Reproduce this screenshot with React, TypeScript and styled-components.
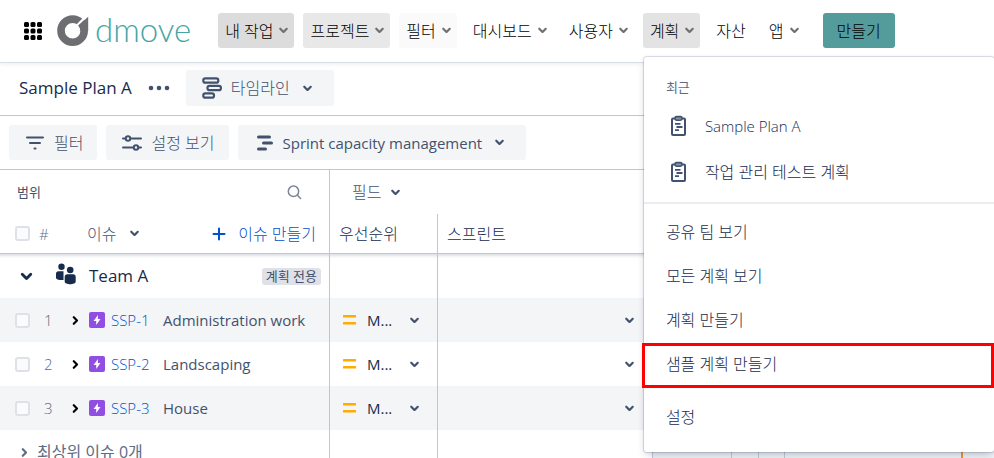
import React from "react";
import styled, { createGlobalStyle } from "styled-components";

const color = {
  ink: "#172b4d",
  text: "#42526e",
  subtle: "#5e6c84",
  line: "#c1c7d0",
  fill: "#f4f5f7",
  link: "#0052cc",
};

const Global = createGlobalStyle`
  *, *::before, *::after { box-sizing: border-box; }
  body {
    margin: 0;
    background: #fff;
    color: ${color.ink};
    font-family: "Open Sans", "Noto Sans CJK KR", sans-serif;
    font-size: 16px;
    font-weight: 300;
    line-height: 20px;
  }
  button { font: inherit; color: inherit; border: 0; background: none; padding: 0; cursor: pointer; white-space: nowrap; }
  a { color: inherit; text-decoration: none; }
  svg { display: block; flex: none; }
  ul { list-style: none; margin: 0; padding: 0; }
`;

const Page = styled.div`
  height: 100vh;
  overflow: hidden;
`;

/* ---------- top navigation ---------- */

const TopBar = styled.header`
  position: relative;
  z-index: 2;
  display: flex;
  align-items: center;
  padding: 13px 0 14px 24px;
  border-bottom: 1px solid #d9dfe8;
  box-shadow: 0 2px 3px rgba(9, 30, 66, 0.06);
`;

const Brand = styled.a`
  display: flex;
  align-items: center;
  gap: 5px;
  height: 35px;
  margin-left: 15px;
  margin-right: 27px;
`;

const Wordmark = styled.span`
  font-family: Lato, sans-serif;
  font-weight: 300;
  font-size: 33px;
  line-height: 32px;
  padding-bottom: 3px;
  color: #45a5a6;
`;

const Nav = styled.nav`
  display: flex;
  gap: 9px;
`;

const NavItem = styled.div`
  position: relative;
`;

const NavButton = styled.button<{ $bg?: string }>`
  display: flex;
  align-items: center;
  gap: 4px;
  height: 35px;
  padding: 0 4px 0 7px;
  border-radius: 3px;
  color: #000;
  background: ${(p) => p.$bg ?? "transparent"};
`;

const NavLink = styled.a`
  display: flex;
  align-items: center;
  height: 35px;
  padding: 0 7px;
  color: #000;
`;

const CreateButton = styled.button`
  height: 35px;
  margin-left: 9px;
  padding: 0 14px;
  border-radius: 3px;
  color: #000;
  background: #549b9c;
`;

/* ---------- plan menu ---------- */

const Menu = styled.div`
  position: absolute;
  top: 44px;
  left: 1px;
  width: 350px;
  padding: 20px 0 13px;
  border-radius: 3px;
  background: #fff;
  box-shadow: 0 4px 8px -2px rgba(9, 30, 66, 0.25), 0 0 1px 1px rgba(9, 30, 66, 0.16);
`;

const MenuTitle = styled.h2`
  margin: 0 0 6px;
  padding: 0 22px;
  font-size: 13px;
  line-height: 20px;
  font-weight: 400;
  color: ${color.subtle};
`;

const MenuGroup = styled.ul<{ $ruled?: boolean; $spaced?: boolean }>`
  ${(p) => p.$ruled && "margin-top: 7px; padding-top: 6px; border-top: 2px solid #ebecf0;"}
  ${(p) => p.$spaced && "margin-top: 9px;"}
`;

const MenuEntry = styled.li<{ $marked?: boolean }>`
  position: relative;
  ${(p) =>
    p.$marked &&
    `&::after {
      content: "";
      position: absolute;
      inset: 1px 0 -2px -2px;
      border: 3px solid #ff0000;
      pointer-events: none;
    }`}
`;

const MenuLink = styled.a<{ $recent?: boolean }>`
  display: flex;
  align-items: center;
  gap: 14px;
  height: ${(p) => (p.$recent ? 46 : 44)}px;
  padding: 0 22px;
`;

const Latin = styled.span`
  font-size: 15px;
`;

/* ---------- plan header and toolbar ---------- */

const PlanBar = styled.div`
  display: flex;
  align-items: center;
  padding: 7px 0 9px 19px;
  border-bottom: 1px solid ${color.line};
`;

const PlanTitle = styled.h1`
  margin: 0;
  font-size: 17px;
  font-weight: 400;
`;

const MoreButton = styled.button`
  margin: 0 16px;
`;

const Toolbar = styled.div`
  display: flex;
  gap: 9px;
  padding: 9px;
  border-bottom: 1px solid ${color.line};
`;

const ToolButton = styled.button<{ $tall?: boolean; $strong?: boolean; $drop?: boolean }>`
  display: flex;
  align-items: center;
  gap: 9px;
  height: ${(p) => (p.$tall ? 36 : 35)}px;
  padding: 0 ${(p) => (p.$drop ? 20 : 14)}px 0 16px;
  border-radius: 3px;
  color: ${color.text};
  background: ${color.fill};
  font-size: ${(p) => (p.$strong ? 15 : 16)}px;
  font-weight: ${(p) => (p.$strong ? 500 : 300)};
  svg + svg { margin-left: 2px; }
`;

/* ---------- issue table ---------- */

const Grid = styled.table`
  width: 100%;
  table-layout: fixed;
  border-collapse: separate;
  border-spacing: 0;
  th, td { padding: 0; font-weight: inherit; text-align: left; }
`;

const ScopeCol = styled.col`width: 330px;`;
const PriorityCol = styled.col`width: 108px;`;
const SprintCol = styled.col`width: 214px;`;

const HeadCell = styled.th<{ $ruled?: boolean; $last?: boolean }>`
  height: ${(p) => (p.$last ? 40 : 44)}px;
  border-right: ${(p) => (p.$ruled ? `1px solid ${color.line}` : "0")};
  border-bottom: ${(p) => (p.$last ? `1px solid ${color.line}` : "0")};
`;

const Row = styled.tr<{ $shaded?: boolean; $first?: boolean }>`
  background: ${(p) => (p.$shaded ? color.fill : "#fff")};
  td { ${(p) => p.$first && "box-shadow: inset 0 4px 3px -2px rgba(9, 30, 66, 0.14);"} }
`;

const Cell = styled.td<{ $ruled?: boolean }>`
  height: 44px;
  border-right: ${(p) => (p.$ruled ? `1px solid ${color.line}` : "0")};
`;

const Line = styled.div<{ $start: number; $end?: number }>`
  display: flex;
  align-items: center;
  padding: 0 ${(p) => p.$end ?? 0}px 0 ${(p) => p.$start}px;
`;

const Push = styled.span`
  margin-left: auto;
  display: flex;
`;

const SectionLabel = styled.span`
  font-size: 13px;
  font-weight: 400;
  color: ${color.text};
`;

const Check = styled.input`
  appearance: none;
  flex: none;
  width: 15px;
  height: 15px;
  margin: 0;
  border: 2px solid #dfe1e6;
  border-radius: 3px;
  background: #fafbfc;
`;

const Num = styled.span<{ $wide?: boolean }>`
  flex: none;
  width: ${(p) => (p.$wide ? 48 : 25)}px;
  margin-left: ${(p) => (p.$wide ? 9 : 14)}px;
  font-size: 15px;
  color: ${color.subtle};
`;

const TextButton = styled.button<{ $link?: boolean; $gap?: number }>`
  display: flex;
  align-items: center;
  gap: ${(p) => p.$gap ?? 12}px;
  color: ${(p) => (p.$link ? color.link : color.text)};
`;

const ColumnName = styled.span`
  font-size: 16px;
`;

const IssueKey = styled.a`
  margin-left: 6px;
  width: 52px;
  font-size: 15px;
  color: ${color.link};
`;

const Summary = styled.span`
  font-size: 15px;
  font-weight: 500;
  color: ${color.text};
  white-space: nowrap;
`;

const Toggle = styled.button`
  margin-right: 7px;
  color: #000;
`;

const TeamToggle = styled.button`
  margin-right: 20px;
  color: ${color.ink};
`;

const TeamName = styled.span`
  margin-left: 12px;
  font-size: 17px;
  font-weight: 500;
`;

const Badge = styled.span`
  padding: 0 4px;
  border-radius: 3px;
  background: #dfe1e6;
  color: ${color.text};
  font-size: 13px;
  line-height: 17px;
  font-weight: 400;
`;

const PickButton = styled.button`
  display: flex;
  align-items: center;
  width: 100%;
  color: ${color.text};
`;

const PickValue = styled.span`
  margin-left: 10px;
  font-size: 15px;
  font-weight: 400;
  color: ${color.ink};
`;

const RestButton = styled.button`
  display: flex;
  align-items: center;
  gap: 6px;
  font-weight: 400;
  color: ${color.subtle};
`;

const Timeline = styled.div`
  position: relative;
  display: flex;
  height: 44px;
  background: #f0f1f4;
`;

const Slot = styled.span<{ $w?: number }>`
  flex: ${(p) => (p.$w ? `0 0 ${p.$w}px` : "1")};
  border-left: 1px solid ${color.line};
`;

const TodayLine = styled.span`
  position: absolute;
  top: 0;
  bottom: 0;
  right: 31px;
  width: 2px;
  background: #f79232;
`;

/* ---------- icons ---------- */

const CHEVRON =
  "M8.292 10.293a1.009 1.009 0 0 0 0 1.419l2.939 2.965c.218.215.5.322.779.322s.556-.107.769-.322l2.93-2.955a1.01 1.01 0 0 0 0-1.419.987.987 0 0 0-1.406 0l-2.298 2.317-2.307-2.327a.99.99 0 0 0-1.406 0z";

const Chevron = ({ size = 13, right = false, fill = "currentColor" }) => (
  <svg width={size} height={size} viewBox="6 6.6 12 12" aria-hidden="true">
    <path d={CHEVRON} fill={fill} transform={right ? "rotate(-90 12 12.6)" : undefined} />
  </svg>
);

const AppsIcon = () => (
  <svg width="18" height="18" viewBox="0 0 18 18" aria-hidden="true">
    {[0, 6.5, 13].map((y) => [0, 6.5, 13].map((x) => <rect key={`${x}-${y}`} x={x} y={y} width="5" height="5" rx="1.5" />))}
  </svg>
);

const LogoMark = () => (
  <svg width="33" height="33" viewBox="0 0 33 33" aria-hidden="true">
    <circle cx="15.6" cy="16.7" r="11.6" fill="none" stroke="#6d6e71" strokeWidth="7.6" />
    <path d="M31 0.5 20 11.5" stroke="#fff" strokeWidth="2.4" />
    <path d="M31.2 2.8V17H23.4A8 8 0 0 0 21.2 11.4Z" fill="#6d6e71" />
  </svg>
);

const DotsIcon = () => (
  <svg width="22" height="6" viewBox="0 0 22 6" fill={color.text} aria-hidden="true">
    <circle cx="3" cy="3" r="2.3" />
    <circle cx="11" cy="3" r="2.3" />
    <circle cx="19" cy="3" r="2.3" />
  </svg>
);

const TimelineIcon = () => (
  <svg width="20" height="22" viewBox="0 0 20 22" fill="none" stroke={color.text} strokeWidth="2.2" aria-hidden="true">
    <rect x="1.3" y="1.3" width="15" height="4.4" rx="2" />
    <rect x="5.5" y="8.8" width="13.4" height="4.4" rx="2" />
    <rect x="1.3" y="16.3" width="10.7" height="4.4" rx="2" />
  </svg>
);

const FilterIcon = () => (
  <svg width="20" height="16" viewBox="0 0 20 16" stroke={color.text} strokeWidth="2" strokeLinecap="round" aria-hidden="true">
    <path d="M2 2.5h16M5 8h10M9.5 13.5h1" />
  </svg>
);

const SettingsIcon = () => (
  <svg width="20" height="18" viewBox="1 0 20 18" fill="none" stroke={color.text} strokeWidth="2" strokeLinecap="round" aria-hidden="true">
    <path d="M2 4.5h2M10 4.5h10M2 13.5h10M18 13.5h2" />
    <circle cx="7" cy="4.5" r="2.2" />
    <circle cx="15" cy="13.5" r="2.2" />
  </svg>
);

const BarsIcon = () => (
  <svg width="20" height="18" viewBox="-2 0 20 18" stroke={color.text} strokeWidth="3" strokeLinecap="round" aria-hidden="true">
    <path d="M2.5 3h11M7.5 9h8M2.5 15h7" />
  </svg>
);

const SearchIcon = () => (
  <svg width="15" height="15" viewBox="0 0 15 15" fill="none" stroke="#7a869a" strokeWidth="1.5" strokeLinecap="round" aria-hidden="true">
    <circle cx="6.5" cy="6.3" r="5.2" />
    <path d="m10.4 10.3 3.2 3.2" />
  </svg>
);

const PlusIcon = () => (
  <svg width="14" height="14" viewBox="0 0 14 14" stroke={color.link} strokeWidth="2" strokeLinecap="round" aria-hidden="true">
    <path d="M7 1.5v11M1.5 7h11" />
  </svg>
);

const PlanIcon = () => (
  <svg width="25" height="22" viewBox="0 0 25 22" fill="none" stroke={color.text} strokeWidth="2" aria-hidden="true">
    <rect x="6" y="3.6" width="13" height="16.5" rx="1" />
    <rect x="9" y="1.6" width="7" height="3.6" rx="1.6" fill="#8993a4" strokeWidth="1.6" />
    <path d="M9 8.8h5.5M10.5 12h6M9 15.2h4" strokeWidth="1.8" />
  </svg>
);

const EpicIcon = () => (
  <svg width="16" height="16" viewBox="0 0 16 16" aria-hidden="true">
    <rect width="16" height="16" rx="2" fill="#904ee2" />
    <path d="M8.9 3v4h2.6L7.2 13V9H4.6Z" fill="#fff" />
  </svg>
);

const TeamIcon = () => (
  <svg width="22" height="26" viewBox="0 0 22 26" fill={color.ink} aria-hidden="true">
    <circle cx="6.5" cy="3.7" r="3.2" />
    <path d="M1 10.8a2.6 2.6 0 0 1 2.6-2.6H8.5V17C4 17.3 1 16.2 1 15Z" />
    <circle cx="15.2" cy="7" r="3.3" />
    <path d="M9.7 14a2.7 2.7 0 0 1 2.7-2.7h5.6A2.7 2.7 0 0 1 20.7 14v4.5c0 3.6-11 3.6-11 0Z" />
  </svg>
);

const MediumIcon = () => (
  <svg width="15" height="12" viewBox="0 0 15 12" fill="#ffab00" aria-hidden="true">
    <rect x="1" y="1" width="13" height="2.5" rx="0.5" />
    <rect x="1" y="8" width="13" height="2.5" rx="0.5" />
  </svg>
);

/* ---------- data ---------- */

const issues = [
  { key: "SSP-1", name: "Administration work" },
  { key: "SSP-2", name: "Landscaping" },
  { key: "SSP-3", name: "House" },
];

const NavDrop = ({ label, bg, children }: { label: string; bg?: string; children?: React.ReactNode }) => (
  <NavItem>
    <NavButton $bg={bg}>
      {label}
      <Chevron fill="#707070" />
    </NavButton>
    {children}
  </NavItem>
);

const PlanMenu = () => (
  <Menu>
    <MenuTitle>최근</MenuTitle>
    <MenuGroup>
      <MenuEntry>
        <MenuLink href="#" $recent><PlanIcon /><Latin>Sample Plan A</Latin></MenuLink>
      </MenuEntry>
      <MenuEntry>
        <MenuLink href="#" $recent><PlanIcon />작업 관리 테스트 계획</MenuLink>
      </MenuEntry>
    </MenuGroup>
    <MenuGroup $ruled>
      <MenuEntry><MenuLink href="#">공유 팀 보기</MenuLink></MenuEntry>
      <MenuEntry><MenuLink href="#">모든 계획 보기</MenuLink></MenuEntry>
      <MenuEntry><MenuLink href="#">계획 만들기</MenuLink></MenuEntry>
      <MenuEntry $marked><MenuLink href="#">샘플 계획 만들기</MenuLink></MenuEntry>
    </MenuGroup>
    <MenuGroup $spaced>
      <MenuEntry><MenuLink href="#">설정</MenuLink></MenuEntry>
    </MenuGroup>
  </Menu>
);

export default function App() {
  return (
    <Page>
      <Global />
      <TopBar>
        <button aria-label="앱 전환"><AppsIcon /></button>
        <Brand href="#"><LogoMark /><Wordmark>dmove</Wordmark></Brand>
        <Nav>
          <NavDrop label="내 작업" bg="#dcdcdc" />
          <NavDrop label="프로젝트" bg="#e8e8e8" />
          <NavDrop label="필터" bg="#fafafa" />
          <NavDrop label="대시보드" />
          <NavDrop label="사용자" />
          <NavDrop label="계획" bg="#e3e3e3"><PlanMenu /></NavDrop>
          <NavLink href="#">자산</NavLink>
          <NavDrop label="앱" />
          <CreateButton>만들기</CreateButton>
        </Nav>
      </TopBar>

      <PlanBar>
        <PlanTitle>Sample Plan A</PlanTitle>
        <MoreButton aria-label="더 보기"><DotsIcon /></MoreButton>
        <ToolButton $tall $drop><TimelineIcon />타임라인<Chevron /></ToolButton>
      </PlanBar>

      <Toolbar>
        <ToolButton><FilterIcon />필터</ToolButton>
        <ToolButton><SettingsIcon />설정 보기</ToolButton>
        <ToolButton $strong $drop><BarsIcon />Sprint capacity management<Chevron /></ToolButton>
      </Toolbar>

      <Grid>
        <colgroup>
          <ScopeCol />
          <PriorityCol />
          <SprintCol />
          <col />
        </colgroup>
        <thead>
          <tr>
            <HeadCell $ruled>
              <Line $start={17} $end={27}>
                <SectionLabel>범위</SectionLabel>
                <Push><button aria-label="검색"><SearchIcon /></button></Push>
              </Line>
            </HeadCell>
            <HeadCell colSpan={2}>
              <Line $start={22}><TextButton $gap={8}>필드<Chevron /></TextButton></Line>
            </HeadCell>
            <HeadCell />
          </tr>
          <tr>
            <HeadCell $ruled $last>
              <Line $start={15} $end={13}>
                <Check type="checkbox" aria-label="모두 선택" />
                <Num $wide>#</Num>
                <TextButton>이슈<Chevron /></TextButton>
                <Push><TextButton $link><PlusIcon />이슈 만들기</TextButton></Push>
              </Line>
            </HeadCell>
            <HeadCell $ruled $last><Line $start={9}><ColumnName>우선순위</ColumnName></Line></HeadCell>
            <HeadCell $last><Line $start={9}><ColumnName>스프린트</ColumnName></Line></HeadCell>
            <HeadCell $last />
          </tr>
        </thead>
        <tbody>
          <Row $first>
            <Cell $ruled>
              <Line $start={18} $end={8}>
                <TeamToggle aria-label="Team A 접기"><Chevron size={17} /></TeamToggle>
                <TeamIcon />
                <TeamName>Team A</TeamName>
                <Push><Badge>계획 전용</Badge></Push>
              </Line>
            </Cell>
            <Cell $ruled />
            <Cell />
            <Cell />
          </Row>
          {issues.map((issue, i) => (
            <Row key={issue.key} $shaded={i % 2 === 0}>
              <Cell $ruled>
                <Line $start={15}>
                  <Check type="checkbox" aria-label={issue.key} />
                  <Num>{i + 1}</Num>
                  <Toggle aria-label={`${issue.key} 펼치기`}><Chevron right /></Toggle>
                  <EpicIcon />
                  <IssueKey href="#">{issue.key}</IssueKey>
                  <Summary>{issue.name}</Summary>
                </Line>
              </Cell>
              <Cell $ruled>
                <Line $start={12} $end={16}>
                  <PickButton aria-label="우선순위">
                    <MediumIcon />
                    <PickValue>M...</PickValue>
                    <Push><Chevron /></Push>
                  </PickButton>
                </Line>
              </Cell>
              <Cell>
                <Line $start={12} $end={16}>
                  <PickButton aria-label="스프린트"><Push><Chevron /></Push></PickButton>
                </Line>
              </Cell>
              <Cell />
            </Row>
          ))}
          <Row>
            <Cell $ruled>
              <Line $start={18}><RestButton><Chevron right />최상위 이슈 0개</RestButton></Line>
            </Cell>
            <Cell $ruled />
            <Cell />
            <Cell>
              <Timeline>
                <Slot $w={79} />
                <Slot $w={27} />
                <Slot $w={26} />
                <Slot />
                <TodayLine />
              </Timeline>
            </Cell>
          </Row>
        </tbody>
      </Grid>
    </Page>
  );
}
